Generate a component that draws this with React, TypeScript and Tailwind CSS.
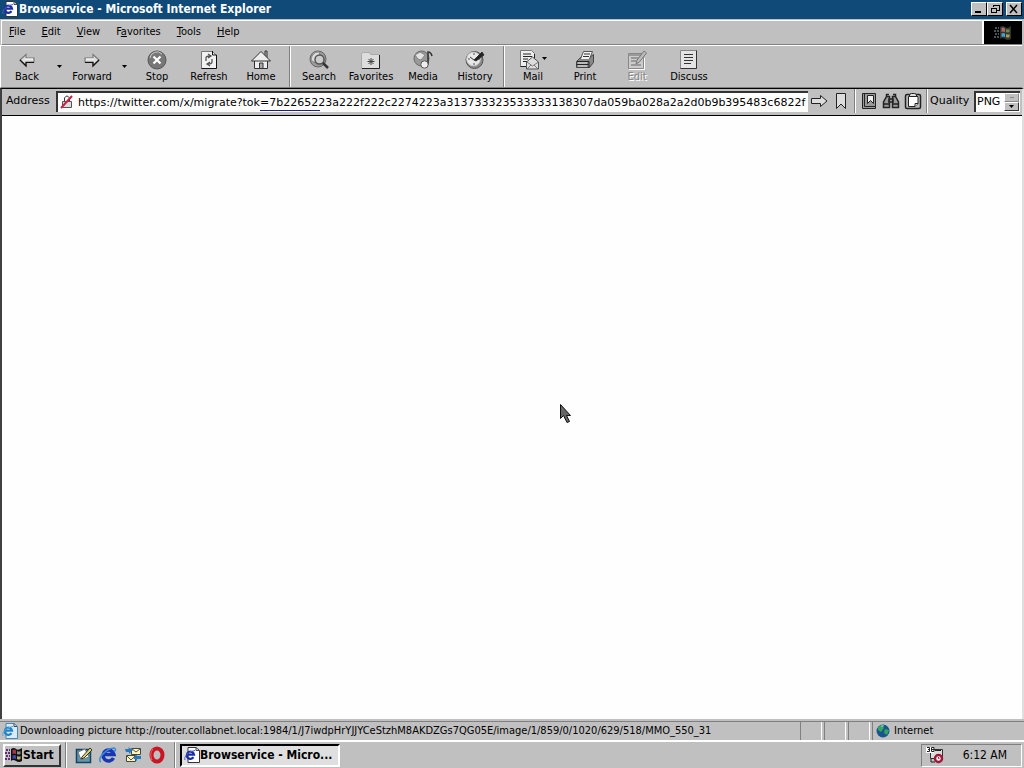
import type { ReactNode } from "react";

const label = "font-['DejaVu_Sans_Condensed','DejaVu_Sans',sans-serif] text-[11px] leading-[14px]";

function IeIcon({ small = false }: { small?: boolean }) {
  return (
    <svg viewBox="0 0 16 16" className="h-4 w-4 shrink-0" aria-hidden="true">
      <path d="M4 .5h8l3.500 3V15.500H4z" fill={small ? "#d8ecf8" : "#fff"} stroke={small ? "#4a86b8" : "#333"} />
      <path d="M12 .5v3h3" fill="none" stroke="#444" />
      <path d="M9.500 10.200A3.600 3.600 0 1 1 10 7.600H4" fill="none" stroke={small ? "#2683c4" : "#1c2fa0"} strokeWidth="2.200" />
      <path d="M1 13C-.5 10 4 4.500 11 3.500" fill="none" stroke={small ? "#55a7dd" : "#4b62cc"} />
    </svg>
  );
}

function ArrowRight({ flip = false }: { flip?: boolean }) {
  return (
    <svg viewBox="0 0 18 18" className={flip ? "h-[18px] w-[18px] -scale-x-100" : "h-[18px] w-[18px]"} aria-hidden="true">
      <path d="M2 7h8V3.500L16 9l-6 5.500V11H2z" fill="#ddd" stroke="#777" strokeWidth="1.100" />
      <path d="M2 11.500h8v3.500l6-6" fill="none" stroke="#111" strokeWidth="1.200" />
      <path d="M3 8h8" stroke="#fff" />
    </svg>
  );
}

function Drawing({ name }: { name: string }) {
  if (name === "Back") return <ArrowRight flip />;
  if (name === "Forward") return <ArrowRight />;
  return (
    <svg viewBox="0 0 20 20" className="h-5 w-5" fill="none" stroke="#333" aria-hidden="true">
      {name === "Stop" && <><circle cx="10" cy="10" r="9" fill="#777" stroke="#555" /><path d="M3 8a7 7 0 0 1 12-4" stroke="#ccc" /><path d="m6.500 6.500 7 7m0-7-7 7" stroke="#fff" strokeWidth="2.200" /></>}
      {name === "Refresh" && <><path d="M2.500 1.500h11l4 4v13h-15z" fill="#f2f2f2" stroke="#777" /><path d="M17.500 5v13.500h-15M13.500 1v4h4" stroke="#111" /><path d="M7 11V8q0-2 4-2M9 4l3 2-3 2M13 9v3q0 2-4 2m2-2-3 2 3 2" stroke="#555" strokeWidth="1.300" /></>}
      {name === "Home" && <><path d="M3.500 10v8.500h13V10" fill="#eee" /><path d="M14 6V1h2v7" fill="#bbb" /><path d="m.5 11 9.500-9.500 9.500 9.500z" fill="#eee" /><path d="M8.500 18v-5h3.500v5" fill="#aaa" /></>}
      {name === "Search" && <><circle cx="9" cy="9" r="8" fill="#999" stroke="#666" /><path d="M3 6q3-5 7-4l1 3-4 3-1 5-4-3z" fill="#ddd" stroke="#888" /><circle cx="10.500" cy="9.500" r="4.500" fill="#ccc" stroke="#555" strokeWidth="1.500" /><path d="m14 13 5 5" strokeWidth="2.500" /></>}
      {name === "Favorites" && <><path d="M.5 4.500v-1l2-1h6l1 2h9v14H.5z" fill="#ddd" stroke="#aaa" /><path d="M18.500 5v13.500H1" stroke="#222" /><path d="M10 8v7m-3.500-3.500h7M7.500 9l5 5m0-5-5 5" stroke="#444" /></>}
      {name === "Media" && <><circle cx="8.500" cy="8.500" r="7.500" fill="#999" stroke="#666" /><path d="m2 5 5-3 5 3-4 5-3-1z" fill="#e2e2e2" stroke="#888" /><path d="M15 15V2q3 0 4 4" strokeWidth="1.500" /><circle cx="11.500" cy="14.500" r="3.700" fill="#eee" stroke="#555" /></>}
      {name === "History" && <><circle cx="9.500" cy="10" r="8.500" fill="#888" stroke="#555" /><circle cx="8.500" cy="9" r="6.800" fill="#e8e8e8" stroke="#ccc" /><path d="M9 3v2m0 8v2M3 9h2m8 0h2" stroke="#555" /><path d="m9 10 8-8 2 3-8 6z" fill="#222" /><path d="M9 10 5 7" /></>}
      {name === "Mail" && <><path d="M1.500.5h11l3 3v13h-14z" fill="#eee" stroke="#777" /><path d="M4 4h8M4 6.500h9M4 9h5M4 11.500h4M15.500 4v5M1.500 16.500H7" stroke="#222" /><path d="m7.500 12 6-5 6 5v7h-12z" fill="#ddd" stroke="#555" /><path d="m8 12 5.500 4 6-4M8 19l4-4m7 4-4-4" stroke="#777" /></>}
      {name === "Print" && <><path d="m1.500 11.500 4-4h9l4-3v8l-4 5h-13z" fill="#888" stroke="#444" /><path d="m5.500 9 3-7.500h9l-3 7.500" fill="#f4f4f4" stroke="#555" /><path d="M9 4h6M8 6.500h6" stroke="#333" /><path d="M2 11.500h12v6M1.500 14.500h12" stroke="#222" /><path d="M3 13h9M3 16h9" stroke="#eee" /></>}
      {name === "Edit" && <><path d="M1.500 3.500h15v15h-15z" fill="#ccc" stroke="#888" /><path d="M2 5h14M4 8h8M4 11h5M4 15h10" stroke="#888" strokeWidth="1.500" /><path d="m9 14 1-4 7-9 2.500 2-7 9z" fill="#bbb" stroke="#777" /><path d="M17.500 8v11.500H2" stroke="#fff" /></>}
      {name === "Discuss" && <><path d="M1.500.5h16v18h-16z" fill="#e4e4e4" stroke="#888" /><path d="M17.500.5v18h-16" stroke="#333" /><path d="M5 4.500h9M5 7.500h9M5 10.500h9M5 13.500h7" stroke="#333" /></>}
    </svg>
  );
}

function Tool({ name, menu = false, disabled = false }: { name: string; menu?: boolean; disabled?: boolean }) {
  return (
    <button disabled={disabled} className="relative flex w-[52px] shrink-0 flex-col items-center">
      <span className={`flex h-[21px] items-center justify-center ${menu ? "pr-2" : ""}`}><Drawing name={name} /></span>
      <span className={disabled ? "text-[#888] [text-shadow:1px_1px_white]" : ""}>{name}</span>
      {menu && <span className="absolute top-2 right-3"><Down /></span>}
    </button>
  );
}

function Down() {
  return <svg viewBox="0 0 5 3" className="h-[3px] w-[5px]" aria-hidden="true"><path d="M0 0h5L2.500 3z" fill="#000" /></svg>;
}

function Separator() {
  return <span className="mx-0.5 w-0.5 shrink-0 self-stretch border-r border-l border-r-white border-l-[#808080]" />;
}

function WindowButton({ title, children }: { title: string; children: ReactNode }) {
  return (
    <button aria-label={title} className="flex h-[14px] w-4 items-center justify-center border border-t-white border-r-black border-b-black border-l-white bg-[#c0c0c0]">
      <svg viewBox="0 0 12 10" className="h-[10px] w-3" fill="none" stroke="#000" shapeRendering="crispEdges" aria-hidden="true">{children}</svg>
    </button>
  );
}

function AddressIcon({ kind, name }: { kind: string; name: string }) {
  return (
    <button aria-label={name} className="flex h-5 w-[22px] shrink-0 items-center justify-center">
      <svg viewBox="0 0 18 18" className="h-[18px] w-[18px]" fill="none" stroke="#222" aria-hidden="true">
        {kind === "go" && <path d="M1.500 6.500h9V3.500L17 9l-6.500 5.500v-3h-9z" fill="#ddd" />}
        {kind === "mark" && <path d="M4.500 1.500h9v15L9 12l-4.500 4.500z" fill="#ddd" />}
        {kind === "book" && <><path d="M2.500 1.500h13v15h-13z" fill="#999" /><path d="M4.500 2v12.500h11" /><path d="M7.500 3.500h6v8l-3-3-3 3z" fill="#eee" /></>}
        {kind === "find" && <><path d="M1.500 15.500V10l3-5.500h3v11zM16.500 15.500V10l-3-5.500h-3v11z" fill="#999" strokeWidth="1.500" /><path d="M4.500 4V2.500H7M13.500 4V2.500H11M7 7h4v3H7zM2 12h5m4 0h5" strokeWidth="1.500" /></>}
        {kind === "clip" && <><rect x="1.500" y="2.500" width="15" height="14" rx="1.500" fill="#bbb" strokeWidth="1.500" /><path d="M4.500 4.500h9.500v7l-3 3H4.500z" fill="#fff" /><path d="M5.500 4.500v-2l2-1h3l2 1v2zM11 14.500v-3h3" fill="#ddd" /></>}
      </svg>
    </button>
  );
}

function FlagIcon({ dark = false }: { dark?: boolean }) {
  return (
    <svg viewBox="0 0 18 16" className="h-4 w-[18px] shrink-0" aria-hidden="true">
      <path d="M6 2q3-2 5 0t6-1v13q-3 2-6 0t-5 0z" fill={dark ? "#333" : "#111"} />
      <path d="M7.500 3q2-1 3.500.5V7q-2-1-3.500 0z" fill={dark ? "#b06a60" : "#a33a42"} />
      <path d="M12 4q2 1 3.500 0v3q-2 1-3.500 0z" fill={dark ? "#668d46" : "#87928b"} />
      <path d="M7.500 8.500q2-1 3.500 0V12q-2-1-3.500 0z" fill={dark ? "#3ca3cc" : "#3c49a8"} />
      <path d="M12 9q2 1 3.500 0v3q-2 1-3.500 0z" fill={dark ? "#a99c50" : "#b9ac7a"} />
      <path d="M1 3h4M0 6h5M1 9h4M0 12h5" stroke={dark ? "#455" : "#622e76"} strokeWidth="2" strokeDasharray="2 1" />
    </svg>
  );
}

function QuickIcon({ kind }: { kind: string }) {
  return (
    <svg viewBox="0 0 18 18" className="h-[18px] w-[18px]" fill="none" aria-hidden="true">
      {kind === "Desktop" && <><path d="M1.500 3.500h14v13h-14z" fill="#5f99ae" stroke="#174265" strokeWidth="1.500" /><path d="m3 6 7-3 4 8-8 3z" fill="#fff" stroke="#777" /><path d="m7 11 8-9 2 2-8 8-3 1z" fill="#ddd46a" stroke="#333" /></>}
      {kind === "Internet Explorer" && <><path d="M14.500 12A5.500 5.500 0 1 1 15 8.500H5" stroke="#1737b4" strokeWidth="3.500" /><path d="M2 16C-3 13 8 2 15 2q3 1 0 4" stroke="#3b8ad9" strokeWidth="1.500" /></>}
      {kind === "Outlook Express" && <><path d="M7.500 2.500h9v6h-9zM2.500 9.500h9v6h-9z" fill="#fff5b8" stroke="#444" /><path d="m8 3 4 3 4-3M3 10l4 4 4-4" stroke="#555" /><path d="M1 3h4l-1-2 5 3-4 4V6H2zM17 13h-4v2l-4-3 5-4-1 2h4z" fill="#2878bb" /></>}
      {kind === "Opera" && <><ellipse cx="9" cy="9" rx="5.500" ry="6.500" stroke="#c91625" strokeWidth="4" /><path d="M5 3q-4 5-1 11" stroke="#ee6360" /></>}
    </svg>
  );
}

const menus = ["File", "Edit", "View", "Favorites", "Tools", "Help"];
const address = "https://twitter.com/x/migrate?tok=7b2265223a222f222c2274223a313733323533333138307da059ba028a2a2d0b9b395483c6822f";

export default function App() {
  return (
    <div className={`flex h-screen flex-col overflow-hidden bg-[#c0c0c0] text-black ${label}`}>
      <header className="flex h-[19px] shrink-0 items-center bg-[#104a78] pr-0.5 pb-0.5 pl-0.5 text-white">
        <IeIcon />
        <h1 className="ml-px flex-1 text-[12px] leading-4 font-bold">Browservice - Microsoft Internet Explorer</h1>
        <div className="flex">
          <WindowButton title="Minimize"><path d="M2 8h6" strokeWidth="2" /></WindowButton>
          <WindowButton title="Restore"><path d="M4 1.500h6v5H8M4 1v2M2.500 4.500h5v4h-5zM2 4h6" /></WindowButton>
          <span className="w-[3px]" />
          <WindowButton title="Close"><path d="m2 1 7 8m0-8-7 8" strokeWidth="1.500" shapeRendering="auto" /></WindowButton>
        </div>
      </header>

      <div className="mt-px mr-0.5 ml-px flex h-[25px] shrink-0 border-t border-b border-l border-t-white border-b-[#808080] border-l-white">
        <nav className="flex flex-1 items-center gap-4 pb-0.5 pl-[7px]">
          {menus.map((m) => (
            <button key={m}>
              {m === "Favorites" ? <>F<u>a</u>vorites</> : <><u>{m[0]}</u>{m.slice(1)}</>}
            </button>
          ))}
        </nav>
        <div className="flex w-10 items-center justify-center border-l-2 border-white bg-black"><FlagIcon dark /></div>
      </div>

      <div className="mr-0.5 flex h-[43px] shrink-0 items-center border-t border-b border-l border-t-white border-b-[#808080] border-l-white">
        <Tool name="Back" />
        <span className="flex w-[13px] justify-center"><Down /></span>
        <Tool name="Forward" />
        <span className="flex w-[13px] justify-center"><Down /></span>
        <Tool name="Stop" />
        <Tool name="Refresh" />
        <Tool name="Home" />
        <Separator />
        <Tool name="Search" /><Tool name="Favorites" /><Tool name="Media" /><Tool name="History" />
        <Separator />
        <Tool name="Mail" menu /><Tool name="Print" /><Tool name="Edit" disabled /><Tool name="Discuss" />
      </div>

      <main className="flex min-h-0 flex-1 flex-col border-t border-r-2 border-l-2 border-t-black border-r-[#dfdfdf] border-l-[#404040] bg-white">
        <div className="flex h-[27px] shrink-0 items-center border-b border-b-black bg-[#c0c0c0] pr-0.5 pb-0.5 pl-1 font-['DejaVu_Sans',sans-serif]">
          <label htmlFor="address" className="w-[50px] shrink-0">Address</label>
          <div className="relative flex h-[21px] min-w-0 flex-1 items-center border-t-2 border-l-2 border-[#333] bg-white pl-0.5">
            <svg viewBox="0 0 14 14" className="mr-1 h-[14px] w-[14px] shrink-0" fill="none" aria-hidden="true">
              <path d="M4.500 7V3q2.500-4 5 0v4" stroke="#333" /><path d="M2.500 6.500h9v6h-9z" fill="#ddd" stroke="#555" /><path d="m1 13 11-12" stroke="#c91f48" strokeWidth="2" />
            </svg>
            <input id="address" defaultValue={address} className="h-[18px] w-full min-w-0 bg-transparent outline-none" />
            <span className="absolute bottom-px left-[202px] h-px w-[60px] bg-[#202080]" />
          </div>
          <AddressIcon kind="go" name="Go" /><AddressIcon kind="mark" name="Bookmark" />
          <Separator />
          <AddressIcon kind="book" name="Bookmarks" /><AddressIcon kind="find" name="Find" /><AddressIcon kind="clip" name="Clipboard" />
          <Separator />
          <span id="quality" className="w-11 shrink-0">Quality</span>
          <div className="flex h-[21px] w-[46px] shrink-0 items-center border-t-2 border-l-2 border-[#333] bg-white">
            <input aria-labelledby="quality" defaultValue="PNG" className="w-7 min-w-0 bg-transparent pl-px outline-none" />
            <span className="flex flex-col">
              <button aria-label="Previous quality" className="flex h-[9px] w-[15px] items-center justify-center border border-[#888] border-t-white border-l-white bg-[#c0c0c0]"><span className="h-px w-1 bg-[#888]" /></button>
              <button aria-label="Next quality" className="flex h-[9px] w-[15px] items-center justify-center border border-[#333] border-t-white border-l-white bg-[#c0c0c0]"><Down /></button>
            </span>
          </div>
        </div>
        <div className="relative flex-1 bg-[#fefefe]">
          <svg viewBox="0 0 12 20" className="absolute top-[288px] left-[558px] h-5 w-3" aria-hidden="true"><path d="M.5.500v14l3-3 3.500 7 2.500-1-3-6h4z" fill="#666" stroke="#111" /></svg>
        </div>
      </main>

      <footer className="shrink-0">
        <div className="mt-0.5 flex h-5 items-center border-t border-b border-t-[#808080] border-b-white pl-0.5">
          <IeIcon small />
          <span className="ml-0.5 min-w-0 flex-1 truncate">Downloading picture http://router.collabnet.local:1984/1/J7iwdpHrYJJYCeStzhM8AKDZGs7QG05E/image/1/859/0/1020/629/518/MMO_550_31</span>
          {[0, 1, 2].map((i) => <span key={i} className="mr-0.5 h-[18px] w-[22px] border-r border-l border-r-white border-l-[#808080]" />)}
          <div className="flex h-[18px] w-[152px] items-center gap-1 border-l border-l-[#808080] pl-[3px]">
            <svg viewBox="0 0 14 14" className="h-[14px] w-[14px]" aria-hidden="true"><circle cx="7" cy="7" r="6.500" fill="#175490" /><path d="m2 3 4-2 2 3-3 4-3-2zM9 5l4 1-2 5-3-2z" fill="#36a65c" /><path d="m4 2 4-1-1 2z" fill="#8ed8d0" /></svg>
            Internet
          </div>
        </div>
        <div className="flex h-[27px] items-center border-t border-white pr-0.5 pl-[3px]">
          <button className="flex h-[23px] w-[58px] items-center border-2 border-t-white border-r-[#333] border-b-[#333] border-l-white text-[12px] font-bold"><FlagIcon />Start</button>
          <span className="w-0.5" />
          <Separator />
          <div className="flex w-[103px] items-center justify-between pr-1.5 pl-1.5">
            {["Desktop", "Internet Explorer", "Outlook Express", "Opera"].map((k) => <button key={k} aria-label={k}><QuickIcon kind={k} /></button>)}
          </div>
          <Separator />
          <span className="w-0.5" />
          <button className="flex h-[23px] w-[160px] items-center border-2 border-t-black border-r-white border-b-white border-l-black bg-[#dfdfdf] pl-0.5 text-[12px] font-bold"><IeIcon /><span className="truncate">Browservice - Micro...</span></button>
          <div className="ml-auto flex h-[23px] w-[101px] items-center border border-t-[#808080] border-r-white border-b-white border-l-[#808080] px-1">
            <svg viewBox="0 0 18 18" className="h-[18px] w-[18px]" fill="none" aria-hidden="true"><path d="M4.500 3.500h12v9h-12z" fill="#ddd" stroke="#333" /><path d="M0 1h8v6H0z" fill="#fff" /><path d="M1 1.500h2.500v4H1m1-2h1.500m2-2H8v4H5.500v-4m0 2H8M9 4.500h6M5 13v3h4" stroke="#222" /><circle cx="12.500" cy="12.500" r="3.500" fill="#fff" stroke="#9e1739" strokeWidth="2.500" /><path d="M12.500 11v1.500h1" stroke="#9e1739" /></svg>
            <time className="ml-auto pr-2.5 text-[12px]">6:12 AM</time>
          </div>
        </div>
      </footer>
    </div>
  );
}
